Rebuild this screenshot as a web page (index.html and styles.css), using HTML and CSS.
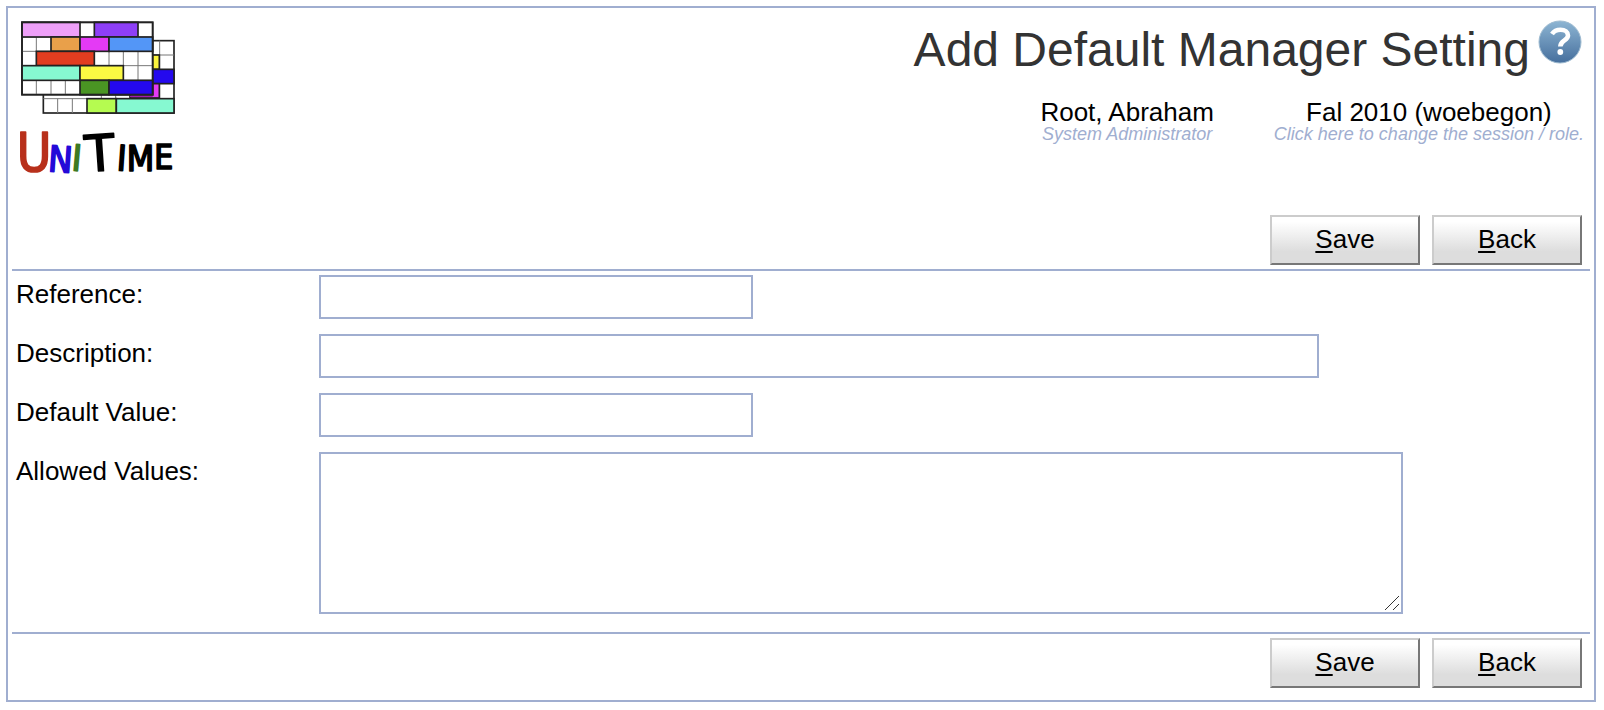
FILE: index.html
```html
<!DOCTYPE html>
<html lang="en">
<head>
<meta charset="utf-8">
<meta name="viewport" content="width=device-width, initial-scale=1">
<title>Add Default Manager Setting</title>
<link rel="stylesheet" href="styles.css">
</head>
<body>
<main class="page">
  <header class="header">
    <svg class="logo" viewBox="60 60 468 504" role="img" aria-label="UniTime">
      <g stroke="#222" stroke-width="5">
        <rect x="130" y="122" width="392" height="217" fill="#fff"/>
        <path d="M458 165H522M479 122V339M130 296H522M173 296V339M217 296V339M304 284V296M347 284V296" stroke="#777" stroke-width="3" fill="none"/>
        <rect x="440" y="165" width="38" height="43" fill="#fbf43d"/>
        <rect x="440" y="208" width="82" height="43" fill="#2409ee"/>
        <rect x="390" y="251" width="88" height="43" fill="#e43af5"/>
        <path d="M390 287H458V291H390Z" fill="#a21cb0" stroke="none"/>
        <rect x="261" y="296" width="88" height="43" fill="#b5fb50"/>
        <rect x="349" y="296" width="173" height="43" fill="#86f9d1"/>
        <rect x="66" y="67" width="392" height="217" fill="#fff"/>
        <path d="M66 111H458M66 154H458M66 197H458M66 241H458M109 111V154M109 241V284M153 241V284M196 241V284M327 154V197M370 154V241M414 154V241" stroke="#777" stroke-width="3" fill="none"/>
        <rect x="66" y="67" width="174" height="44" fill="#ee9ff8"/>
        <rect x="283" y="67" width="131" height="44" fill="#8e3ff7"/>
        <rect x="153" y="111" width="87" height="43" fill="#e9a04a"/>
        <rect x="240" y="111" width="87" height="43" fill="#e43af5"/>
        <rect x="327" y="111" width="131" height="43" fill="#5396f7"/>
        <rect x="109" y="154" width="174" height="43" fill="#e23d20"/>
        <rect x="66" y="197" width="174" height="44" fill="#86f9d1"/>
        <rect x="240" y="197" width="130" height="44" fill="#fbf943"/>
        <rect x="240" y="241" width="87" height="43" fill="#4a9523"/>
        <rect x="327" y="241" width="131" height="43" fill="#2409ee"/>
        <rect x="66" y="67" width="392" height="217" fill="none"/>
      </g>
      <g class="logo-word">
        <text x="50" y="512" font-size="158" fill="#b8301b" stroke="#b8301b">U</text>
        <text x="145" y="516" font-size="108" fill="#2409d8" stroke="#2409d8" transform="rotate(4 180 480)">N</text>
        <text x="216" y="512" font-size="108" fill="#3d7a22" stroke="#3d7a22" transform="rotate(5 232 480)">I</text>
        <text class="logo-tall" x="250" y="513" font-size="160" stroke="#000" transform="rotate(-4 300 450)">T</text>
        <text x="351" y="512" font-size="106" stroke="#000" transform="rotate(4 366 480)">I</text>
        <text x="380" y="512" font-size="106" stroke="#000">M</text>
        <text x="463" y="508" font-size="100" stroke="#000">E</text>
      </g>
    </svg>
    <div class="heading">
      <div class="title-row">
        <h1 class="title">Add Default Manager Setting</h1>
        <button class="help" type="button" aria-label="Help">
          <svg class="help-icon" viewBox="0 0 44 44" aria-hidden="true">
            <defs>
              <linearGradient id="help-fill" x1="0" y1="0" x2="0" y2="1">
                <stop offset="0" stop-color="#8db5d3"/>
                <stop offset="1" stop-color="#466f9d"/>
              </linearGradient>
            </defs>
            <circle cx="22" cy="22" r="21" fill="url(#help-fill)" stroke="#9dbad0"/>
            <path d="M14 14C16 11 19 9.800 22.500 9.800C27 9.800 30 12 30 15.500C30 20.500 22.300 20.500 22.300 26.500" fill="none" stroke="#fff" stroke-width="4.600"/>
            <circle cx="22.300" cy="32" r="2.900" fill="#fff"/>
          </svg>
        </button>
      </div>
      <div class="session">
        <div class="session-item">
          <span class="session-name">Root, Abraham</span>
          <span class="session-note">System Administrator</span>
        </div>
        <div class="session-item">
          <span class="session-name">Fal 2010 (woebegon)</span>
          <a class="session-note" href="#">Click here to change the session / role.</a>
        </div>
      </div>
    </div>
  </header>

  <form class="form">
    <div class="toolbar toolbar-top">
      <button class="button" type="submit" accesskey="s"><u>S</u>ave</button>
      <button class="button" type="button" accesskey="b"><u>B</u>ack</button>
    </div>
    <div class="fields">
      <label class="label" for="reference">Reference:</label>
      <input class="field field-short" id="reference" type="text">
      <label class="label" for="description">Description:</label>
      <input class="field field-long" id="description" type="text">
      <label class="label" for="default-value">Default Value:</label>
      <input class="field field-short" id="default-value" type="text">
      <label class="label" for="allowed-values">Allowed Values:</label>
      <div class="area">
        <textarea class="field field-area" id="allowed-values"></textarea>
        <svg class="grip" viewBox="0 0 16 16" aria-hidden="true"><path d="M1 15L15 1M9 15L15 9"/></svg>
      </div>
    </div>
    <div class="toolbar toolbar-bottom">
      <button class="button" type="submit"><u>S</u>ave</button>
      <button class="button" type="button"><u>B</u>ack</button>
    </div>
  </form>
</main>
</body>
</html>
```
FILE: styles.css
```css
* {
  box-sizing: border-box;
}

body {
  margin: 0;
  padding: 6px 8px 8px 6px;
  background: #fff;
  color: #000;
  font-family: "Liberation Sans", Arial, Helvetica, sans-serif;
  font-size: 26px;
  line-height: 30px;
}

.page {
  padding: 12px 4px;
  border: 2px solid #a0aed0;
}

.header {
  display: flex;
  justify-content: space-between;
  align-items: flex-start;
  min-height: 195px;
  padding: 0 6px 0 8px;
}

.logo {
  flex: none;
  width: 156px;
  height: 168px;
  overflow: visible;
}

.logo-word {
  font-family: "Liberation Sans Narrow", "DejaVu Sans Condensed", "Liberation Sans", sans-serif;
  stroke-width: 5px;
  stroke-linejoin: round;
}

.logo-tall {
  font-family: "Liberation Sans", Arial, sans-serif;
}

.heading {
  display: flex;
  flex-direction: column;
  align-items: flex-end;
  gap: 21px;
}

.title-row {
  display: flex;
  align-items: flex-start;
  gap: 8px;
  padding-right: 2px;
}

.title {
  margin: 0;
  padding-top: 2px;
  color: #333;
  font-size: 48px;
  font-weight: normal;
  line-height: 56px;
}

.help {
  padding: 0;
  border: 0;
  background: none;
  cursor: pointer;
}

.help-icon {
  display: block;
  width: 44px;
  height: 44px;
}

.session {
  display: flex;
  gap: 60px;
}

.session-item {
  display: flex;
  flex-direction: column;
  align-items: center;
  line-height: 26px;
}

.session-note {
  color: #a0aed0;
  font-size: 18px;
  font-style: italic;
  line-height: 18px;
  text-decoration: none;
}

.toolbar {
  display: flex;
  justify-content: flex-end;
  gap: 12px;
  padding: 4px 8px;
}

.toolbar-top {
  padding-top: 0;
  border-bottom: 2px solid #a0aed0;
}

.toolbar-bottom {
  padding-bottom: 0;
  border-top: 2px solid #a0aed0;
}

.button {
  width: 150px;
  height: 50px;
  padding: 0 0 2px;
  border: 2px solid;
  border-color: #ccc #777 #777 #ccc;
  background: linear-gradient(#fff 10%, #ddd 75%);
  color: #000;
  font: inherit;
}

.button u {
  text-decoration-thickness: 2px;
  text-underline-offset: 3px;
}

.fields {
  display: grid;
  grid-template-columns: 303px 1fr;
  row-gap: 15px;
  align-items: start;
  padding: 4px 4px 18px;
}

.label {
  padding-top: 4px;
}

.field {
  display: block;
  max-width: 100%;
  height: 44px;
  padding: 4px 8px;
  border: 2px solid #a0aed0;
  border-radius: 0;
  background: #fff;
  color: #000;
  font: inherit;
}

.field-short {
  width: 434px;
}

.field-long {
  width: 1000px;
}

.area {
  position: relative;
  justify-self: start;
  max-width: 100%;
}

.field-area {
  width: 1084px;
  height: 162px;
  resize: both;
}

.field-area::-webkit-resizer {
  background: transparent;
}

.grip {
  position: absolute;
  right: 3px;
  bottom: 3px;
  width: 16px;
  height: 16px;
  fill: none;
  stroke: #333;
  pointer-events: none;
}
```
